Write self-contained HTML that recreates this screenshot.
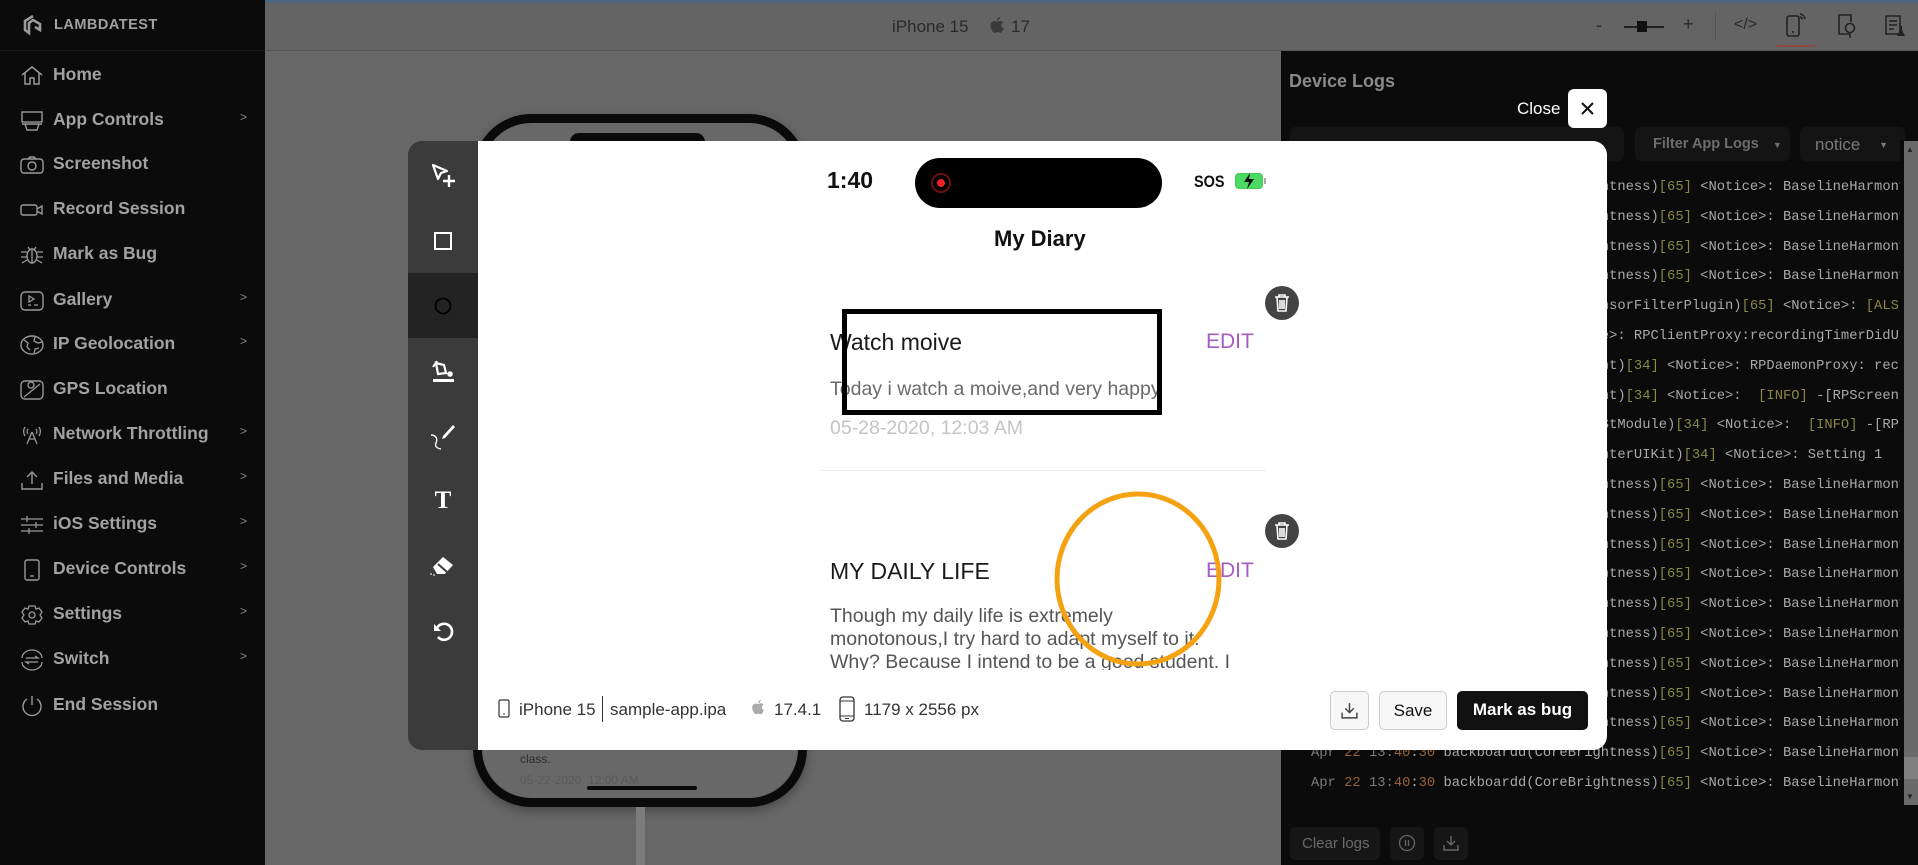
<!DOCTYPE html>
<html><head><meta charset="utf-8"><style>
*{margin:0;padding:0;box-sizing:border-box}
body{width:1918px;height:865px;overflow:hidden;background:#676767;font-family:"Liberation Sans",sans-serif;position:relative}
.a{position:absolute}
.side{left:0;top:0;width:265px;height:865px;background:#0b0b0b}
.mi{position:absolute;left:0;width:265px;height:40px;color:#a2a2a2;font-size:17.5px;font-weight:bold}
.mi span.t{position:absolute;left:53px;top:9px}
.mi span.c{position:absolute;left:240px;top:10px;font-size:12px;font-weight:normal;color:#888}
.mi svg{position:absolute;left:20px;top:10px}
.log{position:absolute;left:1311px;font-family:"Liberation Mono",monospace;font-size:13.8px;color:#a9a9a9;white-space:pre}
.g{color:#7b7b7b}.o{color:#94603a}.y{color:#8a8646}
.tb{position:absolute;left:408px;width:70px;height:65px;display:flex;align-items:center;justify-content:center}
</style></head><body>
<div class="a" style="left:0;top:0;width:1918px;height:3px;background:#4d6780"></div>
<!-- top bar -->
<div class="a" style="left:265px;top:3px;width:1653px;height:48px;background:#646464;border-bottom:1px solid #555"></div>
<div class="a" style="left:892px;top:17px;font-size:17px;color:#2a2a2a">iPhone 15</div>
<svg class="a" style="left:988px;top:16px" width="18" height="20" viewBox="0 0 18 20"><path d="M12 1c0 2-1.5 3.5-3 3.5C9 2.5 10.5 1 12 1zM9 5.5c1 0 2-.8 3.2-.8 1.3 0 2.4.7 3 1.7-2.6 1.5-2.2 5 .4 6-.6 1.8-1.8 4.5-3.3 4.5-1 0-1.4-.6-2.7-.6s-1.8.6-2.8.6C5 17 2.5 13 2.5 9.7 2.5 7 4.3 5 6.3 5c1.2 0 2 .5 2.7.5z" fill="#3a3a3a"/></svg>
<div class="a" style="left:1011px;top:17px;font-size:17px;color:#2a2a2a">17</div>
<div class="a" style="left:1596px;top:15px;font-size:18px;color:#2a2a2a">-</div>
<div class="a" style="left:1624px;top:26px;width:40px;height:2px;background:#222"></div>
<div class="a" style="left:1637px;top:21px;width:10px;height:11px;background:#111"></div>
<div class="a" style="left:1683px;top:14px;font-size:18px;color:#2a2a2a">+</div>
<div class="a" style="left:1715px;top:12px;width:1px;height:28px;background:#555"></div>
<div class="a" style="left:1734px;top:16px;font-size:16px;color:#2a2a2a">&lt;/&gt;</div>
<svg class="a" style="left:1784px;top:12px" width="24" height="26" viewBox="0 0 24 26"><rect x="3" y="4" width="12" height="20" rx="2" fill="none" stroke="#222" stroke-width="1.6"/><path d="M8 20h2" stroke="#222" stroke-width="1.6"/><path d="M16 2a6 6 0 0 1 5 5M16 5a3 3 0 0 1 2.5 2.5" stroke="#222" fill="none" stroke-width="1.5"/></svg>
<div class="a" style="left:1777px;top:45px;width:38px;height:2px;background:#8d4a40"></div>
<svg class="a" style="left:1835px;top:12px" width="24" height="28" viewBox="0 0 24 28"><path d="M14 22H4V3h12v7" fill="none" stroke="#222" stroke-width="1.6"/><circle cx="15" cy="16" r="4.5" fill="none" stroke="#222" stroke-width="1.6"/><path d="M15 20v6" stroke="#222" stroke-width="1.6"/></svg>
<svg class="a" style="left:1884px;top:14px" width="24" height="24" viewBox="0 0 24 24"><rect x="2" y="2" width="14" height="18" fill="none" stroke="#222" stroke-width="1.5"/><path d="M5 7h8M5 11h8M5 15h5" stroke="#222" stroke-width="1.5"/><path d="M16 12v4l-3 6h8l-3-6v-4" fill="#222"/></svg>

<!-- sidebar -->
<div class="a side"></div>
<div class="a" style="left:0;top:50px;width:265px;height:1px;background:#1a1a1a"></div>
<svg class="a" style="left:22px;top:14px" width="22" height="22" viewBox="0 0 22 22"><path d="M11 2L3 7v9l4 3V9l4-3 7 4v6l-5-3" fill="none" stroke="#9a9a9a" stroke-width="2.6"/></svg>
<div class="a" style="left:54px;top:17px;font-size:14.5px;font-weight:bold;color:#a0a0a0;letter-spacing:.5px">LAMBDATEST</div>

<div class="mi" style="top:55px"><svg width="24" height="22" viewBox="0 0 24 22"><path d="M2 10L12 2l10 8M5 8v11h5v-6h4v6h5V8" fill="none" stroke="#999" stroke-width="1.5"/></svg><span class="t">Home</span></div>
<div class="mi" style="top:100px"><svg width="24" height="22" viewBox="0 0 24 22"><rect x="2" y="2" width="20" height="10" fill="none" stroke="#999" stroke-width="1.4"/><path d="M2 14h20M5 14l2 6h10l2-6" fill="none" stroke="#999" stroke-width="1.4"/></svg><span class="t">App Controls</span><span class="c">&gt;</span></div>
<div class="mi" style="top:144px"><svg width="24" height="22" viewBox="0 0 24 22"><rect x="1" y="5" width="22" height="14" rx="3" fill="none" stroke="#999" stroke-width="1.4"/><circle cx="12" cy="12" r="4" fill="none" stroke="#999" stroke-width="1.4"/><path d="M8 5l2-2h4l2 2" fill="none" stroke="#999" stroke-width="1.4"/></svg><span class="t">Screenshot</span></div>
<div class="mi" style="top:189px"><svg width="24" height="22" viewBox="0 0 24 22"><rect x="1" y="6" width="16" height="10" rx="2" fill="none" stroke="#999" stroke-width="1.4"/><path d="M17 10l5-3v8l-5-3" fill="none" stroke="#999" stroke-width="1.4"/></svg><span class="t">Record Session</span></div>
<div class="mi" style="top:234px"><svg width="24" height="22" viewBox="0 0 24 22"><ellipse cx="12" cy="12" rx="5" ry="7" fill="none" stroke="#999" stroke-width="1.4"/><path d="M1 8h6M17 8h6M1 13h6M17 13h6M2 19l5-3M22 19l-5-3M8 3l2 3M16 3l-2 3M12 6v13" stroke="#999" stroke-width="1.3"/></svg><span class="t">Mark as Bug</span></div>
<div class="mi" style="top:280px"><svg width="24" height="22" viewBox="0 0 24 22"><rect x="1" y="2" width="22" height="18" rx="4" fill="none" stroke="#999" stroke-width="1.4"/><path d="M9 6v6l5-3zM8 15h3M14 15h4" fill="none" stroke="#999" stroke-width="1.3"/></svg><span class="t">Gallery</span><span class="c">&gt;</span></div>
<div class="mi" style="top:324px"><svg width="24" height="22" viewBox="0 0 24 22"><ellipse cx="12" cy="11" rx="11" ry="9" fill="none" stroke="#999" stroke-width="1.4"/><path d="M4 6l4 3-1 4 3 3M15 3l-1 4 4 2 4-1M14 20l1-5 4-1" fill="none" stroke="#999" stroke-width="1.3"/></svg><span class="t">IP Geolocation</span><span class="c">&gt;</span></div>
<div class="mi" style="top:369px"><svg width="24" height="22" viewBox="0 0 24 22"><rect x="1" y="2" width="22" height="18" rx="4" fill="none" stroke="#999" stroke-width="1.4"/><path d="M4 18L20 5M8 6a3 3 0 1 1 0 .1" fill="none" stroke="#999" stroke-width="1.3"/></svg><span class="t">GPS Location</span></div>
<div class="mi" style="top:414px"><svg width="24" height="22" viewBox="0 0 24 22"><path d="M12 8l-5 12M12 8l5 12M9 15h6M5 3a8 8 0 0 0 0 9M19 3a8 8 0 0 1 0 9M8 5a4 4 0 0 0 0 5M16 5a4 4 0 0 1 0 5" fill="none" stroke="#999" stroke-width="1.3"/></svg><span class="t">Network Throttling</span><span class="c">&gt;</span></div>
<div class="mi" style="top:459px"><svg width="24" height="22" viewBox="0 0 24 22"><path d="M12 15V3M7 8l5-5 5 5M2 14v6h20v-6" fill="none" stroke="#999" stroke-width="1.4"/></svg><span class="t">Files and Media</span><span class="c">&gt;</span></div>
<div class="mi" style="top:504px"><svg width="24" height="22" viewBox="0 0 24 22"><path d="M1 5h22M1 11h22M1 17h22M7 2v6M16 8v6M9 14v6" fill="none" stroke="#999" stroke-width="1.3"/></svg><span class="t">iOS Settings</span><span class="c">&gt;</span></div>
<div class="mi" style="top:549px"><svg width="24" height="22" viewBox="0 0 24 22"><rect x="5" y="1" width="14" height="20" rx="2" fill="none" stroke="#999" stroke-width="1.4"/><path d="M10 17h4" stroke="#999" stroke-width="1.4"/></svg><span class="t">Device Controls</span><span class="c">&gt;</span></div>
<div class="mi" style="top:594px"><svg width="24" height="22" viewBox="0 0 24 22"><path d="M9 2h6l1 3 3-1 3 4-2 3 2 3-3 4-3-1-1 3H9l-1-3-3 1-3-4 2-3-2-3 3-4 3 1z" fill="none" stroke="#999" stroke-width="1.3"/><circle cx="12" cy="11" r="3" fill="none" stroke="#999" stroke-width="1.3"/></svg><span class="t">Settings</span><span class="c">&gt;</span></div>
<div class="mi" style="top:639px"><svg width="24" height="22" viewBox="0 0 24 22"><path d="M2 9a10 8 0 0 1 20 0M22 13a10 8 0 0 1-20 0M6 9h12l-3-2M18 13H6l3 2" fill="none" stroke="#999" stroke-width="1.3"/></svg><span class="t">Switch</span><span class="c">&gt;</span></div>
<div class="mi" style="top:685px"><svg width="24" height="22" viewBox="0 0 24 22"><path d="M7 4a9 9 0 1 0 10 0M12 1v9" fill="none" stroke="#999" stroke-width="1.4"/></svg><span class="t">End Session</span></div>

<!-- phone behind -->
<div class="a" style="left:473px;top:114px;width:334px;height:693px;border:9px solid #0a0a0a;border-radius:58px;background:#686868;box-shadow:0 4px 10px rgba(0,0,0,.3)"></div>
<div class="a" style="left:570px;top:133px;width:135px;height:18px;border-radius:9px;background:#0a0a0a"></div>
<div class="a" style="left:520px;top:752px;font-size:12px;color:#2c2c2c">class.</div>
<div class="a" style="left:520px;top:773px;font-size:12px;color:#5a5a5a">05-22-2020, 12:00 AM</div>
<div class="a" style="left:587px;top:786px;width:110px;height:4px;border-radius:2px;background:#0a0a0a"></div>
<div class="a" style="left:636px;top:807px;width:9px;height:58px;background:#7c7c7c"></div>

<!-- logs panel -->
<div class="a" style="left:1281px;top:51px;width:637px;height:814px;background:#0b0b0b"></div>
<div class="a" style="left:1289px;top:71px;font-size:18px;font-weight:bold;color:#8a8a8a">Device Logs</div>
<div class="a" style="left:1290px;top:127px;width:334px;height:34px;border-radius:5px;background:#141414"></div>
<div class="a" style="left:1635px;top:127px;width:155px;height:34px;border-radius:5px;background:#141414;color:#6d6d6d;font-size:14.5px;font-weight:bold;padding:9px 0 0 18px">Filter App Logs <span style="font-size:9px;margin-left:10px">▼</span></div>
<div class="a" style="left:1800px;top:127px;width:105px;height:34px;border-radius:5px;background:#141414;color:#7a7a7a;font-size:17px;padding:8px 0 0 15px">notice <span style="font-size:9px;margin-left:14px;vertical-align:2px">▼</span></div>
<div id="logs"></div>
<div class="log" style="top:180px"><span class="g">Apr</span> <span class="o">22</span> <span class="g">13:</span><span class="o">40</span>:<span class="o">30</span> backboardd(CoreBrightness)<span class="y">[65]</span> &lt;Notice&gt;: BaselineHarmony</div>
<div class="log" style="top:210px"><span class="g">Apr</span> <span class="o">22</span> <span class="g">13:</span><span class="o">40</span>:<span class="o">30</span> backboardd(CoreBrightness)<span class="y">[65]</span> &lt;Notice&gt;: BaselineHarmony</div>
<div class="log" style="top:240px"><span class="g">Apr</span> <span class="o">22</span> <span class="g">13:</span><span class="o">40</span>:<span class="o">30</span> backboardd(CoreBrightness)<span class="y">[65]</span> &lt;Notice&gt;: BaselineHarmony</div>
<div class="log" style="top:269px"><span class="g">Apr</span> <span class="o">22</span> <span class="g">13:</span><span class="o">40</span>:<span class="o">30</span> backboardd(CoreBrightness)<span class="y">[65]</span> &lt;Notice&gt;: BaselineHarmony</div>
<div class="log" style="top:299px"><span class="g">Apr</span> <span class="o">22</span> <span class="g">13:</span><span class="o">40</span>:<span class="o">30</span> backboardd(HIDALSSensorFilterPlugin)<span class="y">[65]</span> &lt;Notice&gt;: <span class="y">[ALS</span></div>
<div class="log" style="top:329px"><span class="g">Apr</span> <span class="o">22</span> <span class="g">13:</span><span class="o">40</span>:<span class="o">30</span> mediaserverd &lt;Notice&gt;: RPClientProxy:recordingTimerDidU</div>
<div class="log" style="top:359px"><span class="g">Apr</span> <span class="o">22</span> <span class="g">13:</span><span class="o">40</span>:<span class="o">30</span> replayd(RPScreenAgent)<span class="y">[34]</span> &lt;Notice&gt;: RPDaemonProxy: rec</div>
<div class="log" style="top:389px"><span class="g">Apr</span> <span class="o">22</span> <span class="g">13:</span><span class="o">40</span>:<span class="o">30</span> replayd(RPScreenAgent)<span class="y">[34]</span> &lt;Notice&gt;:  <span class="y">[INFO]</span> -[RPScreen</div>
<div class="log" style="top:418px"><span class="g">Apr</span> <span class="o">22</span> <span class="g">13:</span><span class="o">40</span>:<span class="o">30</span> replayd(RPRecordingStModule)<span class="y">[34]</span> &lt;Notice&gt;:  <span class="y">[INFO]</span> -[RP</div>
<div class="log" style="top:448px"><span class="g">Apr</span> <span class="o">22</span> <span class="g">13:</span><span class="o">40</span>:<span class="o">30</span> replayd(RPControlCenterUIKit)<span class="y">[34]</span> &lt;Notice&gt;: Setting 1</div>
<div class="log" style="top:478px"><span class="g">Apr</span> <span class="o">22</span> <span class="g">13:</span><span class="o">40</span>:<span class="o">30</span> backboardd(CoreBrightness)<span class="y">[65]</span> &lt;Notice&gt;: BaselineHarmony</div>
<div class="log" style="top:508px"><span class="g">Apr</span> <span class="o">22</span> <span class="g">13:</span><span class="o">40</span>:<span class="o">30</span> backboardd(CoreBrightness)<span class="y">[65]</span> &lt;Notice&gt;: BaselineHarmony</div>
<div class="log" style="top:538px"><span class="g">Apr</span> <span class="o">22</span> <span class="g">13:</span><span class="o">40</span>:<span class="o">30</span> backboardd(CoreBrightness)<span class="y">[65]</span> &lt;Notice&gt;: BaselineHarmony</div>
<div class="log" style="top:567px"><span class="g">Apr</span> <span class="o">22</span> <span class="g">13:</span><span class="o">40</span>:<span class="o">30</span> backboardd(CoreBrightness)<span class="y">[65]</span> &lt;Notice&gt;: BaselineHarmony</div>
<div class="log" style="top:597px"><span class="g">Apr</span> <span class="o">22</span> <span class="g">13:</span><span class="o">40</span>:<span class="o">30</span> backboardd(CoreBrightness)<span class="y">[65]</span> &lt;Notice&gt;: BaselineHarmony</div>
<div class="log" style="top:627px"><span class="g">Apr</span> <span class="o">22</span> <span class="g">13:</span><span class="o">40</span>:<span class="o">30</span> backboardd(CoreBrightness)<span class="y">[65]</span> &lt;Notice&gt;: BaselineHarmony</div>
<div class="log" style="top:657px"><span class="g">Apr</span> <span class="o">22</span> <span class="g">13:</span><span class="o">40</span>:<span class="o">30</span> backboardd(CoreBrightness)<span class="y">[65]</span> &lt;Notice&gt;: BaselineHarmony</div>
<div class="log" style="top:687px"><span class="g">Apr</span> <span class="o">22</span> <span class="g">13:</span><span class="o">40</span>:<span class="o">30</span> backboardd(CoreBrightness)<span class="y">[65]</span> &lt;Notice&gt;: BaselineHarmony</div>
<div class="log" style="top:716px"><span class="g">Apr</span> <span class="o">22</span> <span class="g">13:</span><span class="o">40</span>:<span class="o">30</span> backboardd(CoreBrightness)<span class="y">[65]</span> &lt;Notice&gt;: BaselineHarmony</div>
<div class="log" style="top:746px"><span class="g">Apr</span> <span class="o">22</span> <span class="g">13:</span><span class="o">40</span>:<span class="o">30</span> backboardd(CoreBrightness)<span class="y">[65]</span> &lt;Notice&gt;: BaselineHarmony</div>
<div class="log" style="top:776px"><span class="g">Apr</span> <span class="o">22</span> <span class="g">13:</span><span class="o">40</span>:<span class="o">30</span> backboardd(CoreBrightness)<span class="y">[65]</span> &lt;Notice&gt;: BaselineHarmony</div>
<div class="a" style="left:1900px;top:140px;width:18px;height:665px;background:#0b0b0b"></div>
<div class="a" style="left:1904px;top:141px;width:14px;height:664px;background:#6a6a6a"></div>
<div class="a" style="left:1904px;top:757px;width:14px;height:22px;background:#808080"></div>
<div class="a" style="left:1906px;top:145px;font-size:8px;color:#222">▲</div>
<div class="a" style="left:1906px;top:792px;font-size:8px;color:#222">▼</div>
<div class="a" style="left:1290px;top:827px;width:90px;height:33px;border-radius:5px;background:#161616;color:#6a6a6a;font-size:15px;padding:8px 0 0 12px">Clear logs</div>
<div class="a" style="left:1390px;top:827px;width:34px;height:33px;border-radius:5px;background:#161616"></div>
<svg class="a" style="left:1398px;top:834px" width="18" height="18" viewBox="0 0 18 18"><circle cx="9" cy="9" r="7.5" fill="none" stroke="#666" stroke-width="1.3"/><path d="M7.5 6v6M10.5 6v6" stroke="#666" stroke-width="1.3"/></svg>
<div class="a" style="left:1434px;top:827px;width:34px;height:33px;border-radius:5px;background:#161616"></div>
<svg class="a" style="left:1442px;top:834px" width="18" height="18" viewBox="0 0 18 18"><path d="M9 2v9M5 7l4 4 4-4M2 11v5h14v-5" fill="none" stroke="#666" stroke-width="1.4"/></svg>

<!-- modal -->
<div class="a" style="left:1517px;top:99px;font-size:17px;color:#fff">Close</div>
<div class="a" style="left:1568px;top:89px;width:39px;height:39px;border-radius:6px;background:#fff"></div>
<svg class="a" style="left:1580px;top:101px" width="15" height="15" viewBox="0 0 15 15"><path d="M2 2l11 11M13 2L2 13" stroke="#111" stroke-width="2"/></svg>

<div class="a" style="left:408px;top:141px;width:90px;height:609px;border-radius:14px 0 0 14px;background:#3b3b3b"></div>
<div class="a" style="left:408px;top:273px;width:70px;height:65px;background:#232323"></div>
<div class="tb" style="top:143px"><svg width="28" height="28" viewBox="0 0 28 28"><path d="M4 3l14 6-6 2-3 6z" fill="none" stroke="#fff" stroke-width="2.2" stroke-linejoin="round"/><path d="M20 13v12M14 19h12" stroke="#fff" stroke-width="2.4"/></svg></div>
<div class="tb" style="top:208px"><svg width="20" height="20" viewBox="0 0 20 20"><rect x="2" y="2" width="16" height="16" fill="none" stroke="#fff" stroke-width="2"/></svg></div>
<div class="tb" style="top:273px"><svg width="20" height="20" viewBox="0 0 20 20"><circle cx="10" cy="10" r="7.5" fill="none" stroke="#000" stroke-width="1.8"/></svg></div>
<div class="tb" style="top:338px"><svg width="26" height="26" viewBox="0 0 26 26"><path d="M6 5l8 2 2 8-8 1z" fill="none" stroke="#fff" stroke-width="2.2"/><path d="M3 9l4-6" stroke="#fff" stroke-width="2"/><circle cx="20" cy="16" r="2.8" fill="#fff"/><rect x="3" y="21" width="21" height="3" fill="#fff"/></svg></div>
<div class="tb" style="top:403px"><svg width="28" height="28" viewBox="0 0 28 28"><path d="M24 3l2 2-10 11-3 1 1-3z" fill="#fff"/><path d="M2 13c5 0 7 4 5 8s3 6 5 6" fill="none" stroke="#fff" stroke-width="1.4"/></svg></div>
<div class="tb" style="top:468px"><div style="font-family:'Liberation Serif',serif;font-weight:bold;font-size:25px;color:#fff">T</div></div>
<div class="tb" style="top:533px"><svg width="28" height="24" viewBox="0 0 28 24"><path d="M4 13l10-10 10 8-8 9H8z" fill="#fff"/><path d="M9 10l9 8" stroke="#3b3b3b" stroke-width="2"/><path d="M1 20h2M4 21h2" stroke="#fff" stroke-width="1"/></svg></div>
<div class="tb" style="top:598px"><svg width="24" height="24" viewBox="0 0 24 24"><path d="M6 9a8 8 0 1 1 1 9" fill="none" stroke="#fff" stroke-width="2.6"/><path d="M3 5v7h7" fill="#fff"/></svg></div>

<div class="a" style="left:478px;top:141px;width:1129px;height:609px;border-radius:0 14px 14px 0;background:#fff;overflow:hidden">
  <div class="a" style="left:0;top:0;width:1129px;height:609px">
  <div class="a" style="left:349px;top:26px;font-size:23px;font-weight:bold;color:#111">1:40</div>
  <div class="a" style="left:437px;top:17px;width:247px;height:50px;border-radius:25px;background:#000"></div>
  <div class="a" style="left:453px;top:32px;width:20px;height:20px;border-radius:50%;border:2px solid #6a1111;background:#000"></div>
  <div class="a" style="left:459px;top:38px;width:8px;height:8px;border-radius:50%;background:#e22"></div>
  <div class="a" style="left:716px;top:31px;font-size:17px;font-weight:bold;color:#111;transform:scaleX(.85);transform-origin:left">SOS</div>
  <div class="a" style="left:757px;top:32px;width:28px;height:16px;border-radius:4px;border:1.5px solid #49c94e;background:#4cd964"></div>
  <div class="a" style="left:786px;top:37px;width:2px;height:6px;background:#aaa"></div>
  <svg class="a" style="left:764px;top:31px" width="14" height="18" viewBox="0 0 14 18"><path d="M8 1L2 10h5l-2 7 7-10H7z" fill="#111"/></svg>
  <div class="a" style="left:0;width:1129px;top:85px;text-align:center;padding-left:0;font-size:22px;font-weight:bold;color:#111"><span style="position:absolute;left:516px">My Diary</span></div>

  <div class="a" style="left:787px;top:145px;width:34px;height:34px;border-radius:50%;background:#444"></div>
  <svg class="a" style="left:795px;top:152px" width="18" height="20" viewBox="0 0 18 20"><path d="M2 4h14M6 4V2h6v2M4 4l1 14h8l1-14M7 7v9M9 7v9M11 7v9" fill="none" stroke="#fff" stroke-width="1.6"/></svg>
  <div class="a" style="left:352px;top:188px;font-size:23px;color:#1a1a1a">Watch moive</div>
  <div class="a" style="left:728px;top:189px;font-size:21px;color:#a45bc2">EDIT</div>
  <div class="a" style="left:352px;top:237px;font-size:19.5px;color:#6a6a6a">Today i watch a moive,and very happy</div>
  <div class="a" style="left:352px;top:276px;font-size:19.5px;color:#c4c4c4">05-28-2020, 12:03 AM</div>
  <div class="a" style="left:364px;top:168px;width:320px;height:106px;border:5px solid #000"></div>
  <div class="a" style="left:342px;top:329px;width:446px;height:1px;background:#eee"></div>

  <div class="a" style="left:787px;top:373px;width:34px;height:34px;border-radius:50%;background:#444"></div>
  <svg class="a" style="left:795px;top:380px" width="18" height="20" viewBox="0 0 18 20"><path d="M2 4h14M6 4V2h6v2M4 4l1 14h8l1-14M7 7v9M9 7v9M11 7v9" fill="none" stroke="#fff" stroke-width="1.6"/></svg>
  <div class="a" style="left:352px;top:417px;font-size:23px;color:#1a1a1a">MY DAILY LIFE</div>
  <div class="a" style="left:728px;top:418px;font-size:21px;color:#a45bc2">EDIT</div>
  <div class="a" style="left:352px;top:464px;width:440px;height:65px;overflow:hidden;font-size:19.5px;line-height:23px;color:#555">Though my daily life is extremely<br>monotonous,I try hard to adapt myself to it.<br>Why? Because I intend to be a good student. I</div>
  <svg class="a" style="left:570px;top:350px" width="180" height="180" viewBox="0 0 180 180"><ellipse cx="90" cy="88" rx="81" ry="85" fill="none" stroke="#f4a212" stroke-width="5"/></svg>

  <svg class="a" style="left:20px;top:558px" width="12" height="20" viewBox="0 0 12 20"><rect x="1" y="1" width="10" height="17" rx="1.5" fill="none" stroke="#333" stroke-width="1.2"/><path d="M5 15h2" stroke="#333"/></svg>
  <div class="a" style="left:41px;top:559px;font-size:17px;color:#333">iPhone 15</div>
  <div class="a" style="left:124px;top:555px;width:1px;height:26px;background:#333"></div>
  <div class="a" style="left:132px;top:559px;font-size:17px;color:#333">sample-app.ipa</div>
  <svg class="a" style="left:272px;top:558px" width="16" height="18" viewBox="0 0 18 20"><path d="M12 1c0 2-1.5 3.5-3 3.5C9 2.5 10.5 1 12 1zM9 5.5c1 0 2-.8 3.2-.8 1.3 0 2.4.7 3 1.7-2.6 1.5-2.2 5 .4 6-.6 1.8-1.8 4.5-3.3 4.5-1 0-1.4-.6-2.7-.6s-1.8.6-2.8.6C5 17 2.5 13 2.5 9.7 2.5 7 4.3 5 6.3 5c1.2 0 2 .5 2.7.5z" fill="#aaa"/></svg>
  <div class="a" style="left:296px;top:559px;font-size:17px;color:#333">17.4.1</div>
  <svg class="a" style="left:361px;top:555px" width="16" height="26" viewBox="0 0 16 26"><rect x="1" y="1" width="14" height="24" rx="3" fill="none" stroke="#333" stroke-width="1.3"/><path d="M1 5h14M1 20h14M6 22.5h4" stroke="#333" stroke-width="1"/></svg>
  <div class="a" style="left:386px;top:559px;font-size:17px;color:#333">1179 x 2556 px</div>

  <div class="a" style="left:852px;top:550px;width:39px;height:39px;border-radius:5px;border:1px solid #ccc;background:#f7f7f7"></div>
  <svg class="a" style="left:862px;top:560px" width="19" height="19" viewBox="0 0 18 18"><path d="M9 2v9M5 7l4 4 4-4M2 11v5h14v-5" fill="none" stroke="#444" stroke-width="1.4"/></svg>
  <div class="a" style="left:901px;top:550px;width:68px;height:39px;border-radius:5px;border:1px solid #ccc;background:#f7f7f7;font-size:17px;color:#111;text-align:center;padding-top:9px">Save</div>
  <div class="a" style="left:979px;top:550px;width:131px;height:39px;border-radius:5px;background:#111;font-size:17px;font-weight:bold;color:#fff;text-align:center;padding-top:9px">Mark as bug</div>
  </div>
</div>
</body></html>
